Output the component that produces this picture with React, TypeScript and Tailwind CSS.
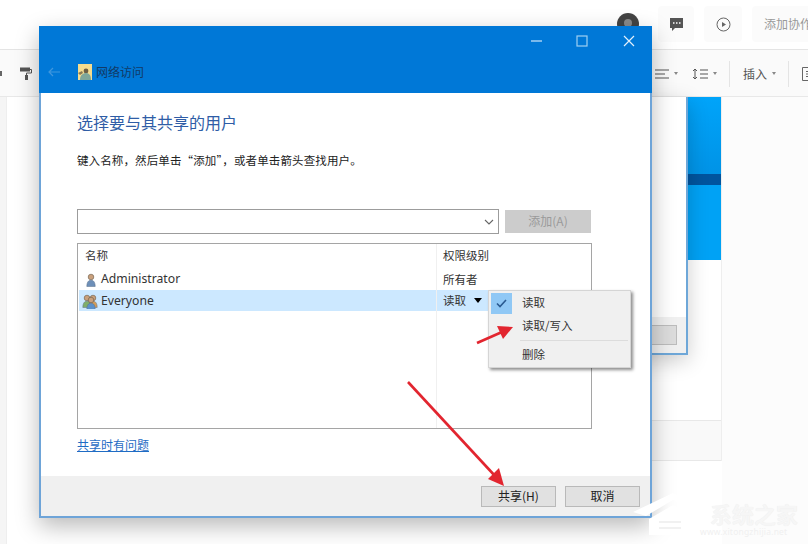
import React from "react";

const cjk = "font-['Noto_Sans_CJK_SC','Noto_Sans',sans-serif]";

function User({ x = 0, color = "#4f7fb5" }: { x?: number; color?: string }) {
  return (
    <g transform={`translate(${x} 0)`}>
      <circle cx="6" cy="4" r="2.8" fill="#c9a07c" stroke="#6a5a48" strokeWidth="0.6" />
      <path d="M1.8 13.5 C1.8 9 3.6 7.2 6 7.2 C8.4 7.2 10.2 9 10.2 13.5 Z" fill={color} stroke="#5a6f88" strokeWidth="0.5" />
    </g>
  );
}

function UserOne() {
  return (
    <svg width="12" height="14" viewBox="0 0 12 14" className="shrink-0">
      <User color="#6d8fb8" />
    </svg>
  );
}

function UserGroup() {
  return (
    <svg width="17" height="15" viewBox="0 0 17 15" className="shrink-0">
      <g transform="translate(0 0)"><User color="#7fae6a" /></g>
      <g transform="translate(6 0)"><User color="#d29c58" /></g>
      <g transform="translate(4 2)"><User color="#5b90c9" /></g>
    </svg>
  );
}

function Caret() {
  return <span className="ml-[5px] inline-block h-0 w-0 border-x-[2px] border-t-[3px] border-x-transparent border-t-[#888]" />;
}

function AlignIcon() {
  return (
    <svg width="14" height="12" viewBox="0 0 14 12" stroke="#555" strokeWidth="1">
      <path d="M0 2h14M0 6h10M0 10h14" />
    </svg>
  );
}

function LineSpacing() {
  return (
    <svg width="16" height="12" viewBox="0 0 16 12" stroke="#555" fill="none" strokeWidth="1">
      <path d="M3 1v10" />
      <path d="M1 3l2-2 2 2M1 9l2 2 2-2" />
      <path d="M8 2h8M8 6h8M8 10h8" />
    </svg>
  );
}

function MenuItem({ children, checked, short }: { children: React.ReactNode; checked?: boolean; short?: boolean }) {
  return (
    <div className={short ? "flex h-[22px] items-center" : "flex h-[23px] items-center"}>
      <div className="flex w-[31px] shrink-0 justify-start pl-[2px]">
        {checked ? (
          <div className="flex h-[21px] w-[21px] items-center justify-center bg-[#90c8f5]">
            <svg width="11" height="9" viewBox="0 0 11 9" fill="none" stroke="#2a5a90" strokeWidth="1.6">
              <path d="M1 4.5l3 3 6-6.5" />
            </svg>
          </div>
        ) : null}
      </div>
      <span className="ml-[2px] text-[11.5px] text-[#333]">{children}</span>
    </div>
  );
}

export default function App() {
  return (
    <div className={`relative h-[544px] w-[808px] overflow-hidden bg-white ${cjk}`}>
      {/* background application */}
      <header className="flex h-[50px] items-center justify-end border-b border-[#e6e6e6] bg-white pb-px">
        <svg width="22" height="22" viewBox="0 0 22 22" className="mr-[19px]">
          <circle cx="11" cy="11" r="11" fill="#444" />
          <circle cx="11" cy="10" r="4" fill="#8a8a8a" />
        </svg>
        <div className="mr-[10px] flex h-[36px] w-[36px] items-center justify-center rounded bg-[#fbfbfb]">
          <svg width="15" height="15" viewBox="0 0 15 15">
            <path d="M1 1h13v10H6l-3 3v-3H1z" fill="#555" />
            <path d="M4 6h1.5M7 6h1.5M10 6h1.5" stroke="#fff" strokeWidth="1.4" />
          </svg>
        </div>
        <div className="mr-[10px] flex h-[36px] w-[38px] items-center justify-center rounded bg-[#fbfbfb]">
          <svg width="15" height="15" viewBox="0 0 15 15" fill="none">
            <circle cx="7.5" cy="7.5" r="6.5" stroke="#666" />
            <path d="M6 5l4 2.5L6 10z" fill="#666" />
          </svg>
        </div>
        <div className="h-[36px] w-[56px] shrink-0 overflow-hidden whitespace-nowrap rounded-l bg-[#fbfbfb] pl-[12px] text-[12px] leading-[36px] text-[#999]">
          添加协作
        </div>
      </header>
      <div className="flex h-[47px] items-center justify-between border-b border-[#e8e8e8] bg-[#fafafa] pt-px text-[#555] shadow-[0_1px_3px_rgba(0,0,0,0.05)]">
        <div className="flex items-center">
          <span className="-ml-[2px] mr-[18px] block h-[5px] w-[4px] bg-[#666]" />
          <svg width="12" height="13" viewBox="0 0 12 13" fill="none">
            <path d="M0 0.5h10v4H0z" fill="#555" />
            <path d="M10 2.5h1.5v3.5H6.5v2" stroke="#555" />
            <path d="M5 8h3v5H5z" fill="#555" />
          </svg>
        </div>
        <div className="-mr-[4px] flex items-center">
          <AlignIcon />
          <Caret />
          <span className="ml-[14px]"><LineSpacing /></span>
          <Caret />
          <span className="ml-[12px] mr-[13px] h-[26px] w-px bg-[#e4e4e4]" />
          <span className="text-[12px] text-[#555]">插入</span>
          <Caret />
          <span className="ml-[12px] mr-[13px] h-[26px] w-px bg-[#e4e4e4]" />
          <svg width="10" height="14" viewBox="0 0 10 14" fill="none" stroke="#666">
            <path d="M10 0.5H0.5v13H10M4 4.5h6M4 7h6M4 9.5h6" />
          </svg>
        </div>
      </div>
      <main className="flex h-[447px] bg-white">
        <div className="h-full w-[6px] bg-[#f5f5f5]" />
        <div className="flex h-full w-[716px] flex-col">
          <div className="flex h-[364px] flex-col border-x border-[#eeeeee] bg-white">
            <div className="flex h-[323px] justify-end">
              <div className="flex h-[163px] w-[34px] flex-col bg-[#00a2f5]">
                <div className="h-[77px] bg-gradient-to-b from-[#00a4fa] to-[#0093e6]" />
                <div className="h-[11px] bg-[#00549e]" />
                <div className="flex-1 bg-[#00a2f5]" />
              </div>
            </div>
            <div className="ml-[40px] mt-auto h-[41px] border-y border-[#e8e8e8] bg-[#f9f9f9]" />
          </div>
          <div className="flex-1 border-l border-[#eeeeee]" />
        </div>
        <div className="flex-1 bg-[#fcfcfc]" />
      </main>

      {/* window behind the dialog */}
      <div className="absolute left-[120px] top-[97px] flex h-[258px] w-[568px] flex-col border-x-2 border-b-2 border-[#6ea7d8] bg-white shadow-[0_6px_20px_rgba(0,0,0,0.2)]">
        <div className="flex-1" />
        <div className="flex h-[36px] items-center justify-end bg-[#f0f0f0] pr-[9px]">
          <div className="h-[20px] w-[75px] border border-[#bcbcbc] bg-[#dcdcdc]" />
        </div>
      </div>

      {/* dialog */}
      <div className="absolute left-[39px] top-[26px] flex h-[492px] w-[613px] flex-col border-x-2 border-b-2 border-[#6ea4d8] bg-white shadow-[0_8px_22px_rgba(0,0,0,0.28)]">
        <div className="-mx-[2px] h-[67px] shrink-0 bg-[#0078d7]">
          <div className="flex h-[30px] items-center justify-end">
            <svg width="12" height="12" viewBox="0 0 12 12" stroke="#cfe6f8" strokeWidth="1.2" className="mr-[33px]">
              <path d="M0 6h11" />
            </svg>
            <svg width="12" height="12" viewBox="0 0 12 12" fill="none" stroke="#9fd0f2" strokeWidth="1.2" className="mr-[35px]">
              <rect x="1" y="1" width="10" height="10" />
            </svg>
            <svg width="12" height="12" viewBox="0 0 12 12" stroke="#e2f0fb" strokeWidth="1.2" className="mr-[17px]">
              <path d="M1 1l10 10M11 1L1 11" />
            </svg>
          </div>
          <div className="mt-[8px] flex h-[16px] items-center pl-[9px]">
            <svg width="12" height="10" viewBox="0 0 12 10" fill="none" stroke="#3f97de" strokeWidth="1.2">
              <path d="M12 5H1M5 1L1 5l4 4" />
            </svg>
            <svg width="14" height="16" viewBox="0 0 14 16" className="ml-[18px]">
              <rect width="14" height="16" fill="#f5dc8e" />
              <circle cx="8" cy="7" r="2.4" fill="#6d5f45" />
              <path d="M2 16c0-5 3-7 6-7s5 2 5 7z" fill="#7fa79a" />
              <path d="M0 9l4-2 1 2-3 2z" fill="#8a7a55" />
            </svg>
            <span className="ml-[4px] text-[12px] text-[#123a66]">网络访问</span>
          </div>
        </div>
        <div className="flex flex-1 flex-col pl-[36px] pr-[58px]">
          <h1 className="mt-[18px] text-[16px] font-normal leading-[22px] text-[#2f5da6]">选择要与其共享的用户</h1>
          <p className="mt-[18px] whitespace-nowrap text-[11.5px] leading-[18px] tracking-[0.12px] text-[#222]">键入名称，然后单击“添加”，或者单击箭头查找用户。</p>
          <div className="mt-[40px] flex h-[25px] w-[514px] items-stretch justify-between">
            <div className="flex w-[422px] items-center justify-end border border-[#9c9c9c] bg-white pr-[4px]">
              <svg width="10" height="6" viewBox="0 0 10 6" fill="none" stroke="#666" strokeWidth="1.1">
                <path d="M1 1l4 4 4-4" />
              </svg>
            </div>
            <button className="my-px w-[86px] bg-[#cccccc] pb-[2px] text-[12px] text-[#9a9a9a]">添加(A)</button>
          </div>
          <div className="mt-[9px] flex h-[186px] w-[515px] border border-[#a5a5a5] text-[12px] text-[#333]">
            <div className="relative w-[358px] shrink-0 pt-[3px]">
              <div className="flex h-[18px] items-center pl-[7px] text-[11.5px]">名称</div>
              <div className="mt-[3px] flex h-[22px] items-center pl-[7px] pt-px font-['Noto_Sans',sans-serif] text-[12.2px]">
                <UserOne />
                <span className="ml-[4px]">Administrator</span>
              </div>
              <div className="ml-px flex h-[21px] items-center bg-[#cce8ff] pl-[2px] pt-px font-['Noto_Sans',sans-serif] text-[12.2px]">
                <UserGroup />
                <span className="ml-[3px]">Everyone</span>
              </div>
            </div>
            <div className="flex-1 border-l border-[#f0f0f0] pt-[3px]">
              <div className="flex h-[18px] items-center pl-[6px] text-[11.5px]">权限级别</div>
              <div className="mt-[3px] flex h-[22px] items-center pl-[6px] pt-px text-[11.5px]">所有者</div>
              <div className="flex h-[21px] items-center bg-[#cce8ff] pl-[6px] text-[11.5px]">
                读取
                <span className="ml-[8px] h-0 w-0 border-x-[4px] border-t-[5px] border-x-transparent border-t-black" />
              </div>
            </div>
          </div>
          <a className="mt-[7px] w-fit text-[12px] leading-[18px] text-[#1f6cc4] underline">共享时有问题</a>
        </div>
        <div className="flex h-[40px] shrink-0 items-start justify-end gap-[9px] bg-[#f0f0f0] pr-[10px] pt-[10px]">
          <button className="h-[21px] w-[75px] border border-[#b9b9b9] bg-[#e1e1e1] pb-[2px] text-[12px] leading-[16px] text-[#222]">共享(H)</button>
          <button className="h-[21px] w-[75px] border border-[#b9b9b9] bg-[#e1e1e1] pb-[2px] text-[12px] leading-[16px] text-[#222]">取消</button>
        </div>
      </div>

      {/* permission menu */}
      <div className="absolute left-[488px] top-[290px] w-[143px] border border-[#d5d5d5] bg-[#f0f0f0] pt-px shadow-[2px_2px_3px_rgba(0,0,0,0.45)]">
        <MenuItem checked short>读取</MenuItem>
        <MenuItem>读取/写入</MenuItem>
        <div className="ml-[31px] mr-[2px] mt-[3px] h-px bg-[#dcdcdc]" />
        <div className="mt-[2px] pb-px"><MenuItem>删除</MenuItem></div>
      </div>

      {/* annotation arrows */}
      <svg width="808" height="544" viewBox="0 0 808 544" className="pointer-events-none absolute left-0 top-0">
        <path d="M477 343L502 332" stroke="#e2252f" strokeWidth="2.6" />
        <path d="M513 327L497 326L503 339Z" fill="#e2252f" />
        <path d="M408 382L496 477" stroke="#e2252f" strokeWidth="2.6" />
        <path d="M504 486L488 479L499 468Z" fill="#e2252f" />
      </svg>

      {/* watermark */}
      <div className="absolute left-[633px] top-[493px] flex h-[42px]">
        <svg width="72" height="42" viewBox="0 0 72 42" className="shrink-0">
          <path d="M0 19L40 0l30 17-8 2-22-12L13 23z" fill="#fff" />
          <path d="M16 26L40 12l17 10v20H16z" fill="#fff" />
          <path d="M26 29h22M26 35h22" stroke="#f1f1f1" strokeWidth="2" />
        </svg>
        <div className="ml-[5px] flex flex-col">
          <span className="mt-[9px] text-[22px] font-bold leading-[22px] text-[#f6f6f6] [text-shadow:0_0_1px_rgba(0,0,0,0.08)]">系统之家</span>
          <span className="-ml-[10px] mt-[3px] whitespace-nowrap font-['Noto_Sans',sans-serif] text-[8.5px] leading-[10px] tracking-[0.2px] text-[#f0f0f0]">www.xitongzhijia.net</span>
        </div>
      </div>
    </div>
  );
}
